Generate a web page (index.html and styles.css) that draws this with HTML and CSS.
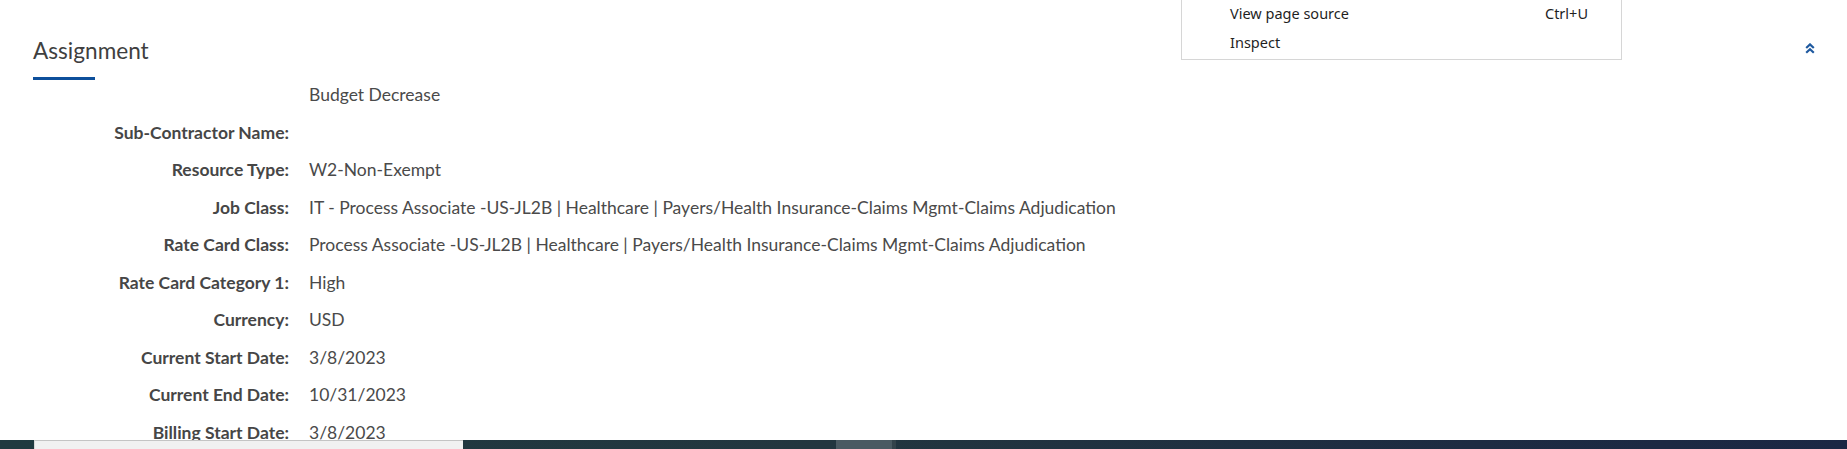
FILE: index.html
```html
<!DOCTYPE html>
<html lang="en">
<head>
<meta charset="utf-8">
<title>Assignment</title>
<link rel="stylesheet" href="styles.css">
</head>
<body>
<div class="screen">
  <main class="page">
    <header class="section-head">
      <div class="title-wrap">
        <h2 class="section-title">Assignment</h2>
        <div class="title-bar"></div>
      </div>
      <button class="collapse-btn" aria-label="Collapse">
        <svg width="10" height="11" viewBox="0 0 10 11" aria-hidden="true">
          <path d="M1.2 5 L5 1.4 L8.8 5" fill="none" stroke="#1f5aa0" stroke-width="2.2"/>
          <path d="M1.2 9.8 L5 6.2 L8.8 9.8" fill="none" stroke="#1f5aa0" stroke-width="2.2"/>
        </svg>
      </button>
    </header>
    <dl class="details">
      <dt></dt><dd>Budget Decrease</dd>
      <dt>Sub-Contractor Name:</dt><dd></dd>
      <dt>Resource Type:</dt><dd>W2-Non-Exempt</dd>
      <dt>Job Class:</dt><dd>IT - Process Associate -US-JL2B | Healthcare | Payers/Health Insurance-Claims Mgmt-Claims Adjudication</dd>
      <dt>Rate Card Class:</dt><dd>Process Associate -US-JL2B | Healthcare | Payers/Health Insurance-Claims Mgmt-Claims Adjudication</dd>
      <dt>Rate Card Category 1:</dt><dd>High</dd>
      <dt>Currency:</dt><dd>USD</dd>
      <dt>Current Start Date:</dt><dd>3/8/2023</dd>
      <dt>Current End Date:</dt><dd>10/31/2023</dd>
      <dt>Billing Start Date:</dt><dd>3/8/2023</dd>
    </dl>
  </main>

  <div class="context-menu">
    <div class="menu-item"><span>View page source</span><span class="shortcut">Ctrl+U</span></div>
    <div class="menu-item"><span>Inspect</span></div>
  </div>

  <div class="taskbar">
    <div class="search-box"></div>
    <div class="task-gap"></div>
    <div class="task-active"></div>
    <div class="task-sep"></div>
    <div class="task-fill"></div>
    <div class="clock">11:55 PM</div>
  </div>
</div>
</body>
</html>
```
FILE: styles.css
```css
html, body {
  margin: 0;
  padding: 0;
  height: 449px;
  overflow: hidden;
  background: #ffffff;
}

.screen {
  position: relative;
  width: 1847px;
  height: 449px;
  overflow: hidden;
  font-family: Lato, "Open Sans", sans-serif;
  color: #444444;
}

.page {
  display: flex;
  flex-direction: column;
}

.section-head {
  display: flex;
  justify-content: space-between;
  align-items: flex-start;
  padding: 37px 32px 0 33px;
}

.section-title {
  margin: 0;
  font-size: 22.6px;
  font-weight: 400;
  line-height: 28px;
  color: #3f3f3f;
}

.title-bar {
  margin-top: 12px;
  width: 62px;
  height: 3px;
  background: #0d4f9b;
}

.collapse-btn {
  margin-top: 6px;
  padding: 0;
  border: 0;
  background: none;
  display: flex;
}

.details {
  margin: 3px 0 0 0;
  display: grid;
  grid-template-columns: 289px 1fr;
  grid-auto-rows: 24px;
  column-gap: 20px;
  row-gap: 13.5px;
  font-size: 17.5px;
  line-height: 24px;
}

.details dt {
  text-align: right;
  font-weight: 700;
  color: #464646;
}

.details dd {
  margin: 0;
  color: #4a4a4a;
  white-space: nowrap;
}

.context-menu {
  position: absolute;
  left: 1181px;
  top: -20px;
  width: 439px;
  padding-top: 18px;
  padding-bottom: 2px;
  background: #ffffff;
  border: 1px solid #d6d6d6;
  font-family: "Noto Sans", "Open Sans", sans-serif;
  font-size: 14.5px;
  color: #1f1f1f;
}

.menu-item {
  display: flex;
  justify-content: space-between;
  height: 29px;
  line-height: 29px;
  padding: 0 33px 0 48px;
}

.taskbar {
  position: absolute;
  left: 0;
  right: 0;
  top: 440px;
  height: 48px;
  display: flex;
  background: linear-gradient(90deg, #203a40 0%, #22363f 45%, #1d2b42 80%, #1b2744 100%);
}

.search-box {
  margin-left: 34px;
  width: 428px;
  height: 40px;
  background: #f1f1f1;
  border-top: 1px solid #c4c4c4;
  border-left: 1px solid #d8d8d8;
}

.task-gap {
  width: 373px;
}

.task-active {
  width: 56px;
  background: #4a5a62;
}

.task-sep {
  width: 4px;
  background: #33434b;
}

.task-fill {
  flex: 1;
}

.clock {
  position: absolute;
  left: 1760px;
  top: 6px;
  font-family: "Noto Sans", sans-serif;
  font-size: 13px;
  color: #ffffff;
}
```
